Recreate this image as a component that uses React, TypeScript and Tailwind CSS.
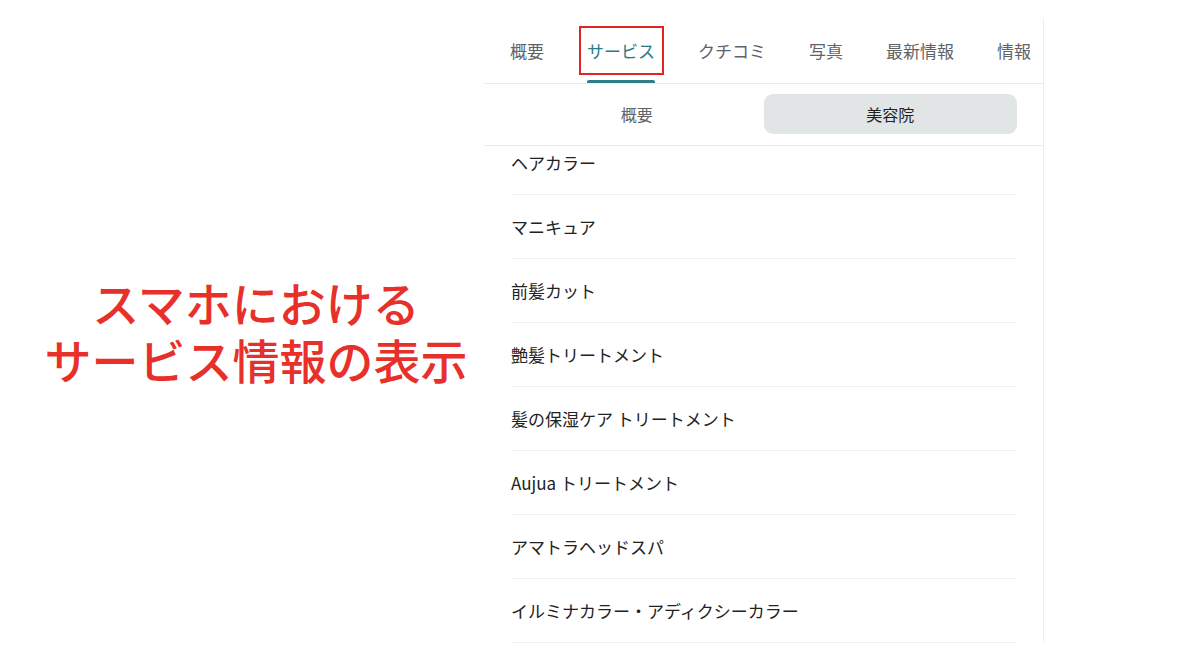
import React from "react";

const tabs = ["概要", "サービス", "クチコミ", "写真", "最新情報", "情報"];
const items = [
  "ヘアカラー",
  "マニキュア",
  "前髪カット",
  "艶髪トリートメント",
  "髪の保湿ケア トリートメント",
  "Aujua トリートメント",
  "アマトラヘッドスパ",
  "イルミナカラー・アディクシーカラー",
];

export default function App() {
  return (
    <div
      className="flex h-[668px] w-[1200px] overflow-hidden bg-white"
      style={{ fontFamily: '"Noto Sans CJK JP", "Noto Sans", sans-serif' }}
    >
      <div className="flex w-[484px] items-center justify-center pb-[8px] pl-[28px]">
        <div className="text-center text-[47px] font-medium leading-[57px] text-[#e8302a]">
          <div>スマホにおける</div>
          <div>サービス情報の表示</div>
        </div>
      </div>

      <div className="mt-[18px] flex h-[625px] w-[560px] flex-col border-r border-[#eeeeee]">
        <div className="flex h-[66px] shrink-0 gap-[43px] border-b border-[#ebebeb] pl-[26px]">
          {tabs.map((t, i) => (
            <div key={t} className="relative flex flex-col">
              <div
                className={
                  "pt-[21px] text-[17px] leading-[24px] whitespace-nowrap " +
                  (i === 1 ? "text-[#2b7a85]" : "text-[#5f6368]")
                }
              >
                {t}
              </div>
              <div className="flex-1" />
              {i === 1 ? (
                <>
                  <div className="h-[3px] rounded-t-[2px] bg-[#2f7d88]" />
                  <div className="absolute -left-[8px] -right-[9px] top-[8px] h-[49px] border-2 border-[#e02424]" />
                </>
              ) : (
                <div className="h-[3px]" />
              )}
            </div>
          ))}
        </div>

        <div className="grid shrink-0 grid-cols-2 border-b border-[#ebebeb] px-[26px] pt-[10px] pb-[11px]">
          <div className="flex h-[40px] items-center justify-center text-[16px] text-[#5f6368]">
            概要
          </div>
          <div className="flex h-[40px] items-center justify-center rounded-[9px] bg-[#e1e5e5] text-[16px] text-[#222]">
            美容院
          </div>
        </div>

        <div className="flex-1 overflow-hidden">
          <div className="-mt-[15px] flex flex-col pl-[27px] pr-[26px]">
            {items.map((it) => (
              <div
                key={it}
                className="flex h-[64px] items-center border-b border-[#eeeeee] text-[17px] text-[#222]"
              >
                {it}
              </div>
            ))}
          </div>
        </div>
      </div>
    </div>
  );
}
